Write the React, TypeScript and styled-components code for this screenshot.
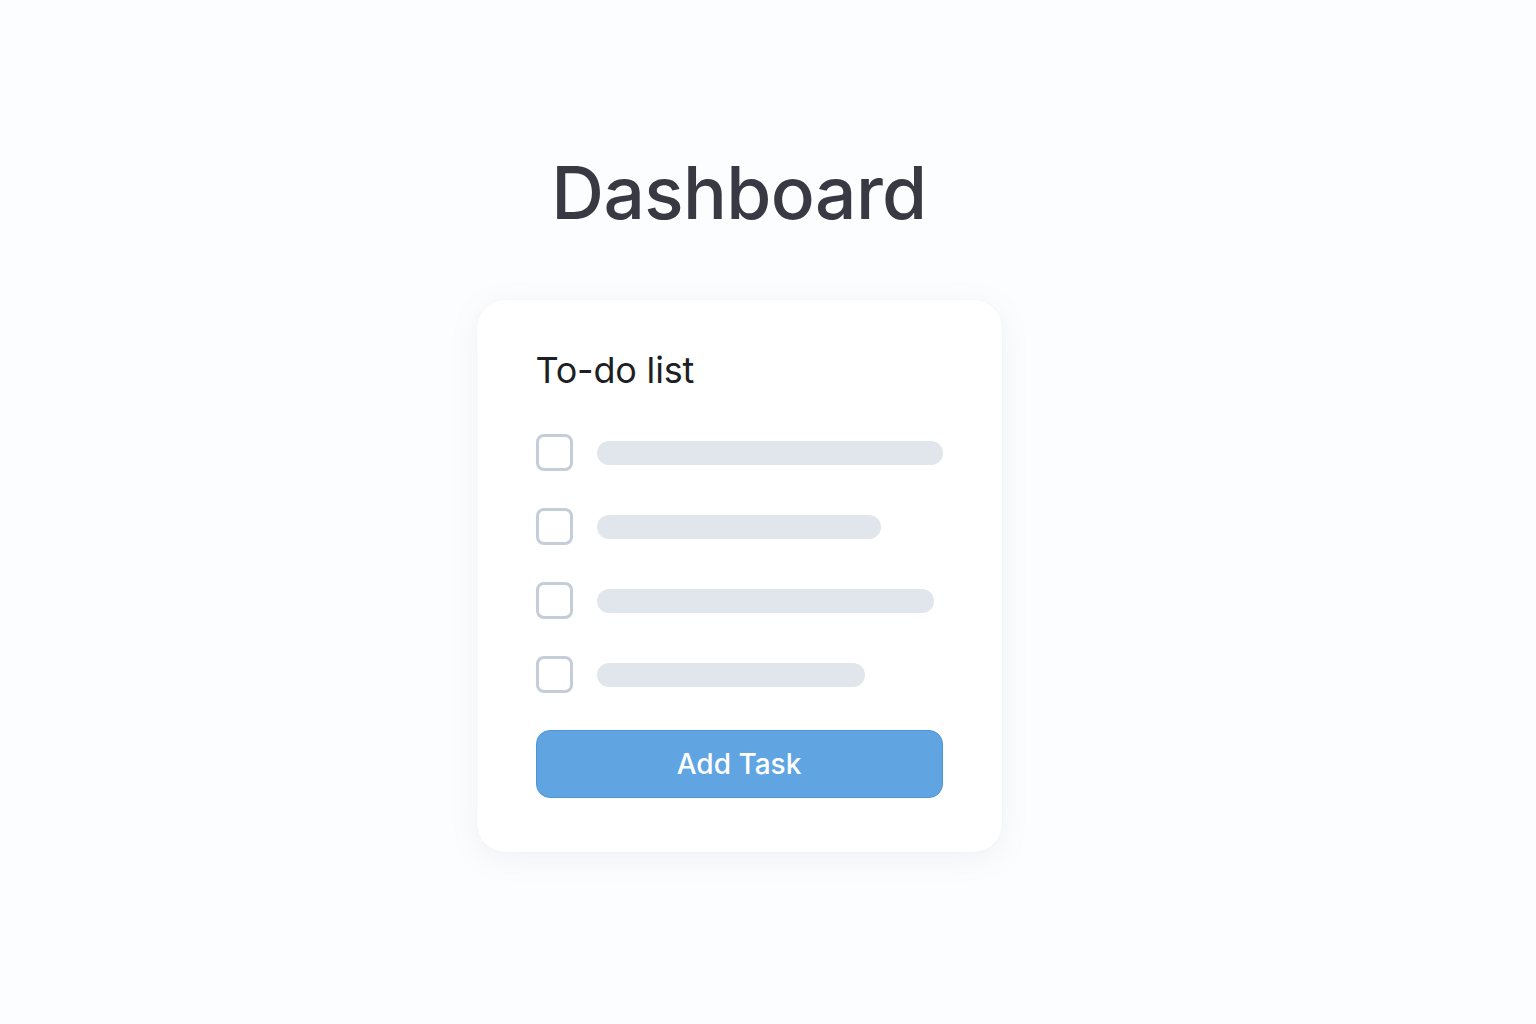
import React from "react";
import styled, { createGlobalStyle } from "styled-components";

const Global = createGlobalStyle`
  html, body { margin: 0; padding: 0; background: #fcfdfe; }
  body { font-family: Inter, "Liberation Sans", sans-serif; }
`;

const Page = styled.main`
  min-height: 1024px;
  box-sizing: border-box;
  display: flex;
  flex-direction: column;
  align-items: center;
  padding: 148px 58px 0 0;
  background: #fcfdfe;
`;

const Title = styled.h1`
  margin: 0;
  font-size: 73px;
  font-weight: 500;
  letter-spacing: -0.6px;
  line-height: 90px;
  color: #383943;
`;

const Card = styled.section`
  margin-top: 62px;
  width: 525px;
  height: 552px;
  box-sizing: border-box;
  padding: 45px 59px 54px;
  background: #ffffff;
  border-radius: 28px;
  box-shadow: 0 6px 28px rgba(120, 135, 180, 0.1), 0 0 2px rgba(120, 135, 180, 0.06);
  display: flex;
  flex-direction: column;
`;

const CardTitle = styled.h2`
  margin: 0;
  font-size: 36px;
  font-weight: 400;
  line-height: 50px;
  color: #1e1f24;
  letter-spacing: -0.2px;
`;

const List = styled.ul`
  list-style: none;
  margin: 39px 0 0;
  padding: 0;
  display: flex;
  flex-direction: column;
  gap: 37px;
`;

const Row = styled.li`
  display: flex;
  align-items: center;
  gap: 24px;
  height: 37px;
`;

const Box = styled.span`
  width: 37px;
  height: 37px;
  box-sizing: border-box;
  border: 3px solid #c4cdd8;
  border-radius: 8px;
  flex: none;
`;

const Bar = styled.span<{ $w: number }>`
  height: 24px;
  width: ${(p) => p.$w}px;
  border-radius: 12px;
  background: #e1e6ec;
`;

const Button = styled.button`
  margin-top: 37px;
  height: 69px;
  width: 100%;
  border: 1px solid #4a94de;
  border-radius: 14px;
  background: #60a5e2;
  color: #ffffff;
  font-family: Inter, "Liberation Sans", sans-serif;
  font-size: 28px;
  font-weight: 500;
  cursor: pointer;
`;

const rows = [347, 284, 337, 268];

export default function App() {
  return (
    <>
      <Global />
      <Page>
        <Title>Dashboard</Title>
        <Card>
          <CardTitle>To-do list</CardTitle>
          <List>
            {rows.map((w, i) => (
              <Row key={i}>
                <Box />
                <Bar $w={w} />
              </Row>
            ))}
          </List>
          <Button>Add Task</Button>
        </Card>
      </Page>
    </>
  );
}
